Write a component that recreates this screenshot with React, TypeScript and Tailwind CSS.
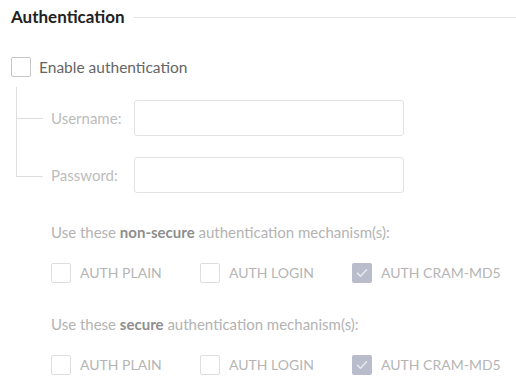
import React from "react";

const font = { fontFamily: "Lato, 'Noto Sans', sans-serif" };

function Box({ checked = false, disabled = false }: { checked?: boolean; disabled?: boolean }) {
  if (checked) {
    return (
      <span className="flex h-[20px] w-[20px] shrink-0 items-center justify-center rounded-[2px] bg-[#b9bccb]">
        <svg width="12" height="10" viewBox="0 0 12 10" fill="none">
          <path d="M1.5 5.2 4.5 8.2 10.5 1.8" stroke="#e8e9ef" strokeWidth="1.6" strokeLinecap="round" strokeLinejoin="round" />
        </svg>
      </span>
    );
  }
  return (
    <span
      className={
        "block h-[20px] w-[20px] shrink-0 rounded-[2px] border bg-white " +
        (disabled ? "border-[#dedede]" : "border-[#c6c6c6]")
      }
    />
  );
}

function Mechanisms({ kind }: { kind: string }) {
  const items = [
    { label: "AUTH PLAIN", w: "w-[149px]", checked: false },
    { label: "AUTH LOGIN", w: "w-[152px]", checked: false },
    { label: "AUTH CRAM-MD5", w: "w-[150px]", checked: true },
  ];
  return (
    <div className="ml-[40px]">
      <p className="whitespace-nowrap text-[15px] leading-[20px] text-[#b3b3b3]">
        Use these <b className="font-bold text-[#8e8e8e]">{kind}</b> authentication mechanism(s):
      </p>
      <div className="mt-[21px] flex">
        {items.map((it) => (
          <div key={it.label} className={"flex shrink-0 items-center gap-[9px] " + it.w}>
            <Box checked={it.checked} disabled />
            <span className="whitespace-nowrap text-[14px] leading-[20px] text-[#b5b5b5]">{it.label}</span>
          </div>
        ))}
      </div>
    </div>
  );
}

export default function App() {
  return (
    <div className="min-h-screen w-[516px] bg-white pl-[11px] pt-[6px]" style={font}>
      {/* heading */}
      <div className="flex items-center">
        <h2 className="text-[17px] font-bold leading-[22px] text-[#222]">Authentication</h2>
        <div className="ml-[9px] h-px flex-1 bg-[#e3e3e3]" />
      </div>

      {/* enable */}
      <label className="mt-[29px] flex items-center gap-[8px]">
        <Box />
        <span className="text-[15.5px] leading-[20px] text-[#666]">Enable authentication</span>
      </label>

      {/* credentials tree */}
      <div className="mt-[10px]">
        <div className="flex h-[49px]">
          <div className="ml-[5px] flex w-[27px] flex-col">
            <div className="h-[32px] border-b border-l border-[#dedede]" />
            <div className="flex-1 border-l border-[#dedede]" />
          </div>
          <div className="ml-[8px] flex items-end">
            <span className="flex h-[36px] w-[83px] items-center text-[15px] text-[#bcbcbc]">Username:</span>
            <input disabled className="h-[36px] w-[270px] rounded-[3px] border border-[#e3e3e3] bg-white" />
          </div>
        </div>
        <div className="flex h-[57px]">
          <div className="ml-[5px] flex w-[27px] flex-col">
            <div className="h-[41px] border-b border-l border-[#dedede]" />
          </div>
          <div className="ml-[8px] flex items-end">
            <span className="flex h-[36px] w-[83px] items-center text-[15px] text-[#bcbcbc]">Password:</span>
            <input disabled className="h-[36px] w-[270px] rounded-[3px] border border-[#e3e3e3] bg-white" />
          </div>
        </div>
      </div>

      <div className="mt-[29px]">
        <Mechanisms kind="non-secure" />
      </div>
      <div className="mt-[31px]">
        <Mechanisms kind="secure" />
      </div>
    </div>
  );
}
